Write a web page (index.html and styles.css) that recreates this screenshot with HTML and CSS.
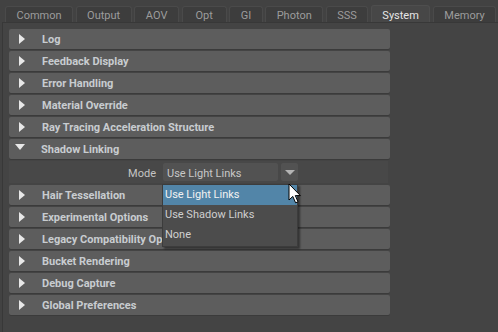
FILE: index.html
```html
<!DOCTYPE html>
<html>
<head>
<meta charset="utf-8">
<link rel="stylesheet" href="styles.css">
</head>
<body>
<div class="window">
  <div class="tabbar">
    <div class="tab">Common</div>
    <div class="tab">Output</div>
    <div class="tab tab-wide">AOV</div>
    <div class="tab tab-wide">Opt</div>
    <div class="tab">GI</div>
    <div class="tab">Photon</div>
    <div class="tab">SSS</div>
    <div class="tab active">System</div>
    <div class="tab">Memory</div>
  </div>
  <div class="panel">
    <div class="frames">
      <div class="frame"><span class="tri right"></span><span class="label">Log</span></div>
      <div class="frame"><span class="tri right"></span><span class="label">Feedback Display</span></div>
      <div class="frame"><span class="tri right"></span><span class="label">Error Handling</span></div>
      <div class="frame"><span class="tri right"></span><span class="label">Material Override</span></div>
      <div class="frame"><span class="tri right"></span><span class="label">Ray Tracing Acceleration Structure</span></div>
      <div class="frame"><span class="tri down"></span><span class="label">Shadow Linking</span></div>
      <div class="frame-body">
        <span class="field-label">Mode</span>
        <div class="combo">
          <div class="combo-value">Use Light Links</div>
          <div class="combo-btn"><span class="small-tri"></span></div>
          <div class="popup">
            <div class="item selected">Use Light Links</div>
            <div class="item">Use Shadow Links</div>
            <div class="item">None</div>
          </div>
          <svg class="cursor" width="14" height="22" viewBox="0 0 14 22">
            <path d="M1 1 L1 17 L4.8 13.4 L7.6 19.8 L10 18.8 L7.3 12.6 L12.4 12.6 Z" fill="#ffffff" stroke="#000000" stroke-width="1" stroke-linejoin="miter"/>
          </svg>
        </div>
      </div>
      <div class="frame"><span class="tri right"></span><span class="label">Hair Tessellation</span></div>
      <div class="frame"><span class="tri right"></span><span class="label">Experimental Options</span></div>
      <div class="frame"><span class="tri right"></span><span class="label">Legacy Compatibility Options</span></div>
      <div class="frame"><span class="tri right"></span><span class="label">Bucket Rendering</span></div>
      <div class="frame"><span class="tri right"></span><span class="label">Debug Capture</span></div>
      <div class="frame"><span class="tri right"></span><span class="label">Global Preferences</span></div>
    </div>
  </div>
</div>
</body>
</html>
```
FILE: styles.css
```css
* { box-sizing: border-box; }
html, body { margin: 0; padding: 0; }
body {
  width: 498px;
  height: 332px;
  overflow: hidden;
  background: #444444;
  font-family: Roboto, "Liberation Sans", sans-serif;
  font-size: 11px;
}
.window {
  height: 332px;
  display: flex;
  flex-direction: column;
  background: #424242;
}
.tabbar {
  display: flex;
  gap: 2.5px;
  height: 22px;
  padding: 6px 0 0 5px;
  align-items: flex-end;
}
.tab {
  height: 16px;
  padding: 1px 10.5px 0;
  text-align: center;
  background: #3d3d3d;
  border: 1px solid #4a4a4a;
  border-bottom: none;
  border-radius: 3px 3px 0 0;
  color: #9c9c9c;
  line-height: 15px;
  white-space: nowrap;
}
.tab-wide {
  min-width: 45px;
}
.tab.active {
  height: 17px;
  padding-top: 2px;
  background: #474747;
  border-color: #4e4e4e;
  color: #e6e6e6;
}
.panel {
  flex: 1;
  margin-left: 2px;
  border-left: 1px solid #383838;
  border-top: 1px solid #383838;
  background: #444444;
  padding: 6px 0 0 6px;
}
.frames {
  width: 381px;
  display: flex;
  flex-direction: column;
  gap: 2px;
}
.frame {
  height: 20px;
  background: #5d5d5d;
  border-radius: 2px;
  box-shadow: 0 1px 0 #3b3b3b;
  display: flex;
  align-items: center;
  padding-left: 10px;
}
.tri {
  width: 0;
  height: 0;
  flex: none;
}
.tri.right {
  border-top: 5px solid transparent;
  border-bottom: 5px solid transparent;
  border-left: 6px solid #e8e8e8;
  margin-right: 17px;
  margin-top: -1px;
}
.tri.down {
  border-left: 5.5px solid transparent;
  border-right: 5.5px solid transparent;
  border-top: 6px solid #e8e8e8;
  margin-left: -4px;
  margin-right: 16px;
  margin-top: -4px;
}
.label {
  font-weight: bold;
  color: #c8ccd0;
  white-space: nowrap;
  line-height: 18px;
  padding-top: 2px;
}
.frame-body {
  height: 22px;
  width: 379px;
  background: #484848;
  display: flex;
  align-items: center;
  padding-left: 116px;
}
.field-label {
  color: #c4c4c4;
  width: 31px;
  text-align: right;
  margin-right: 7px;
  padding-top: 2px;
}
.combo {
  position: relative;
  display: flex;
  gap: 3px;
  height: 18px;
}
.combo-value {
  width: 115px;
  height: 18px;
  background: #525252;
  border-radius: 2px;
  color: #c8c8c8;
  padding: 1px 0 0 4px;
  line-height: 19px;
  white-space: nowrap;
}
.combo-btn {
  width: 17px;
  height: 18px;
  background: #525252;
  border-radius: 2px;
  display: flex;
  align-items: center;
  justify-content: center;
}
.small-tri {
  width: 0;
  height: 0;
  border-left: 5px solid transparent;
  border-right: 5px solid transparent;
  border-top: 5px solid #b4b4b4;
}
.popup {
  position: absolute;
  left: -1px;
  top: 21px;
  width: 136px;
  height: 63px;
  background: #4c4c4c;
  border: 1px solid #3c3c3c;
  box-shadow: 2px 2px 2px rgba(0, 0, 0, 0.45);
}
.item {
  height: 20px;
  line-height: 20px;
  padding-left: 2px;
  color: #cfcfcf;
  white-space: nowrap;
}
.item.selected {
  background: #5285a8;
  color: #f2f2f2;
}
.cursor {
  position: absolute;
  left: 125px;
  top: 20px;
}
```
